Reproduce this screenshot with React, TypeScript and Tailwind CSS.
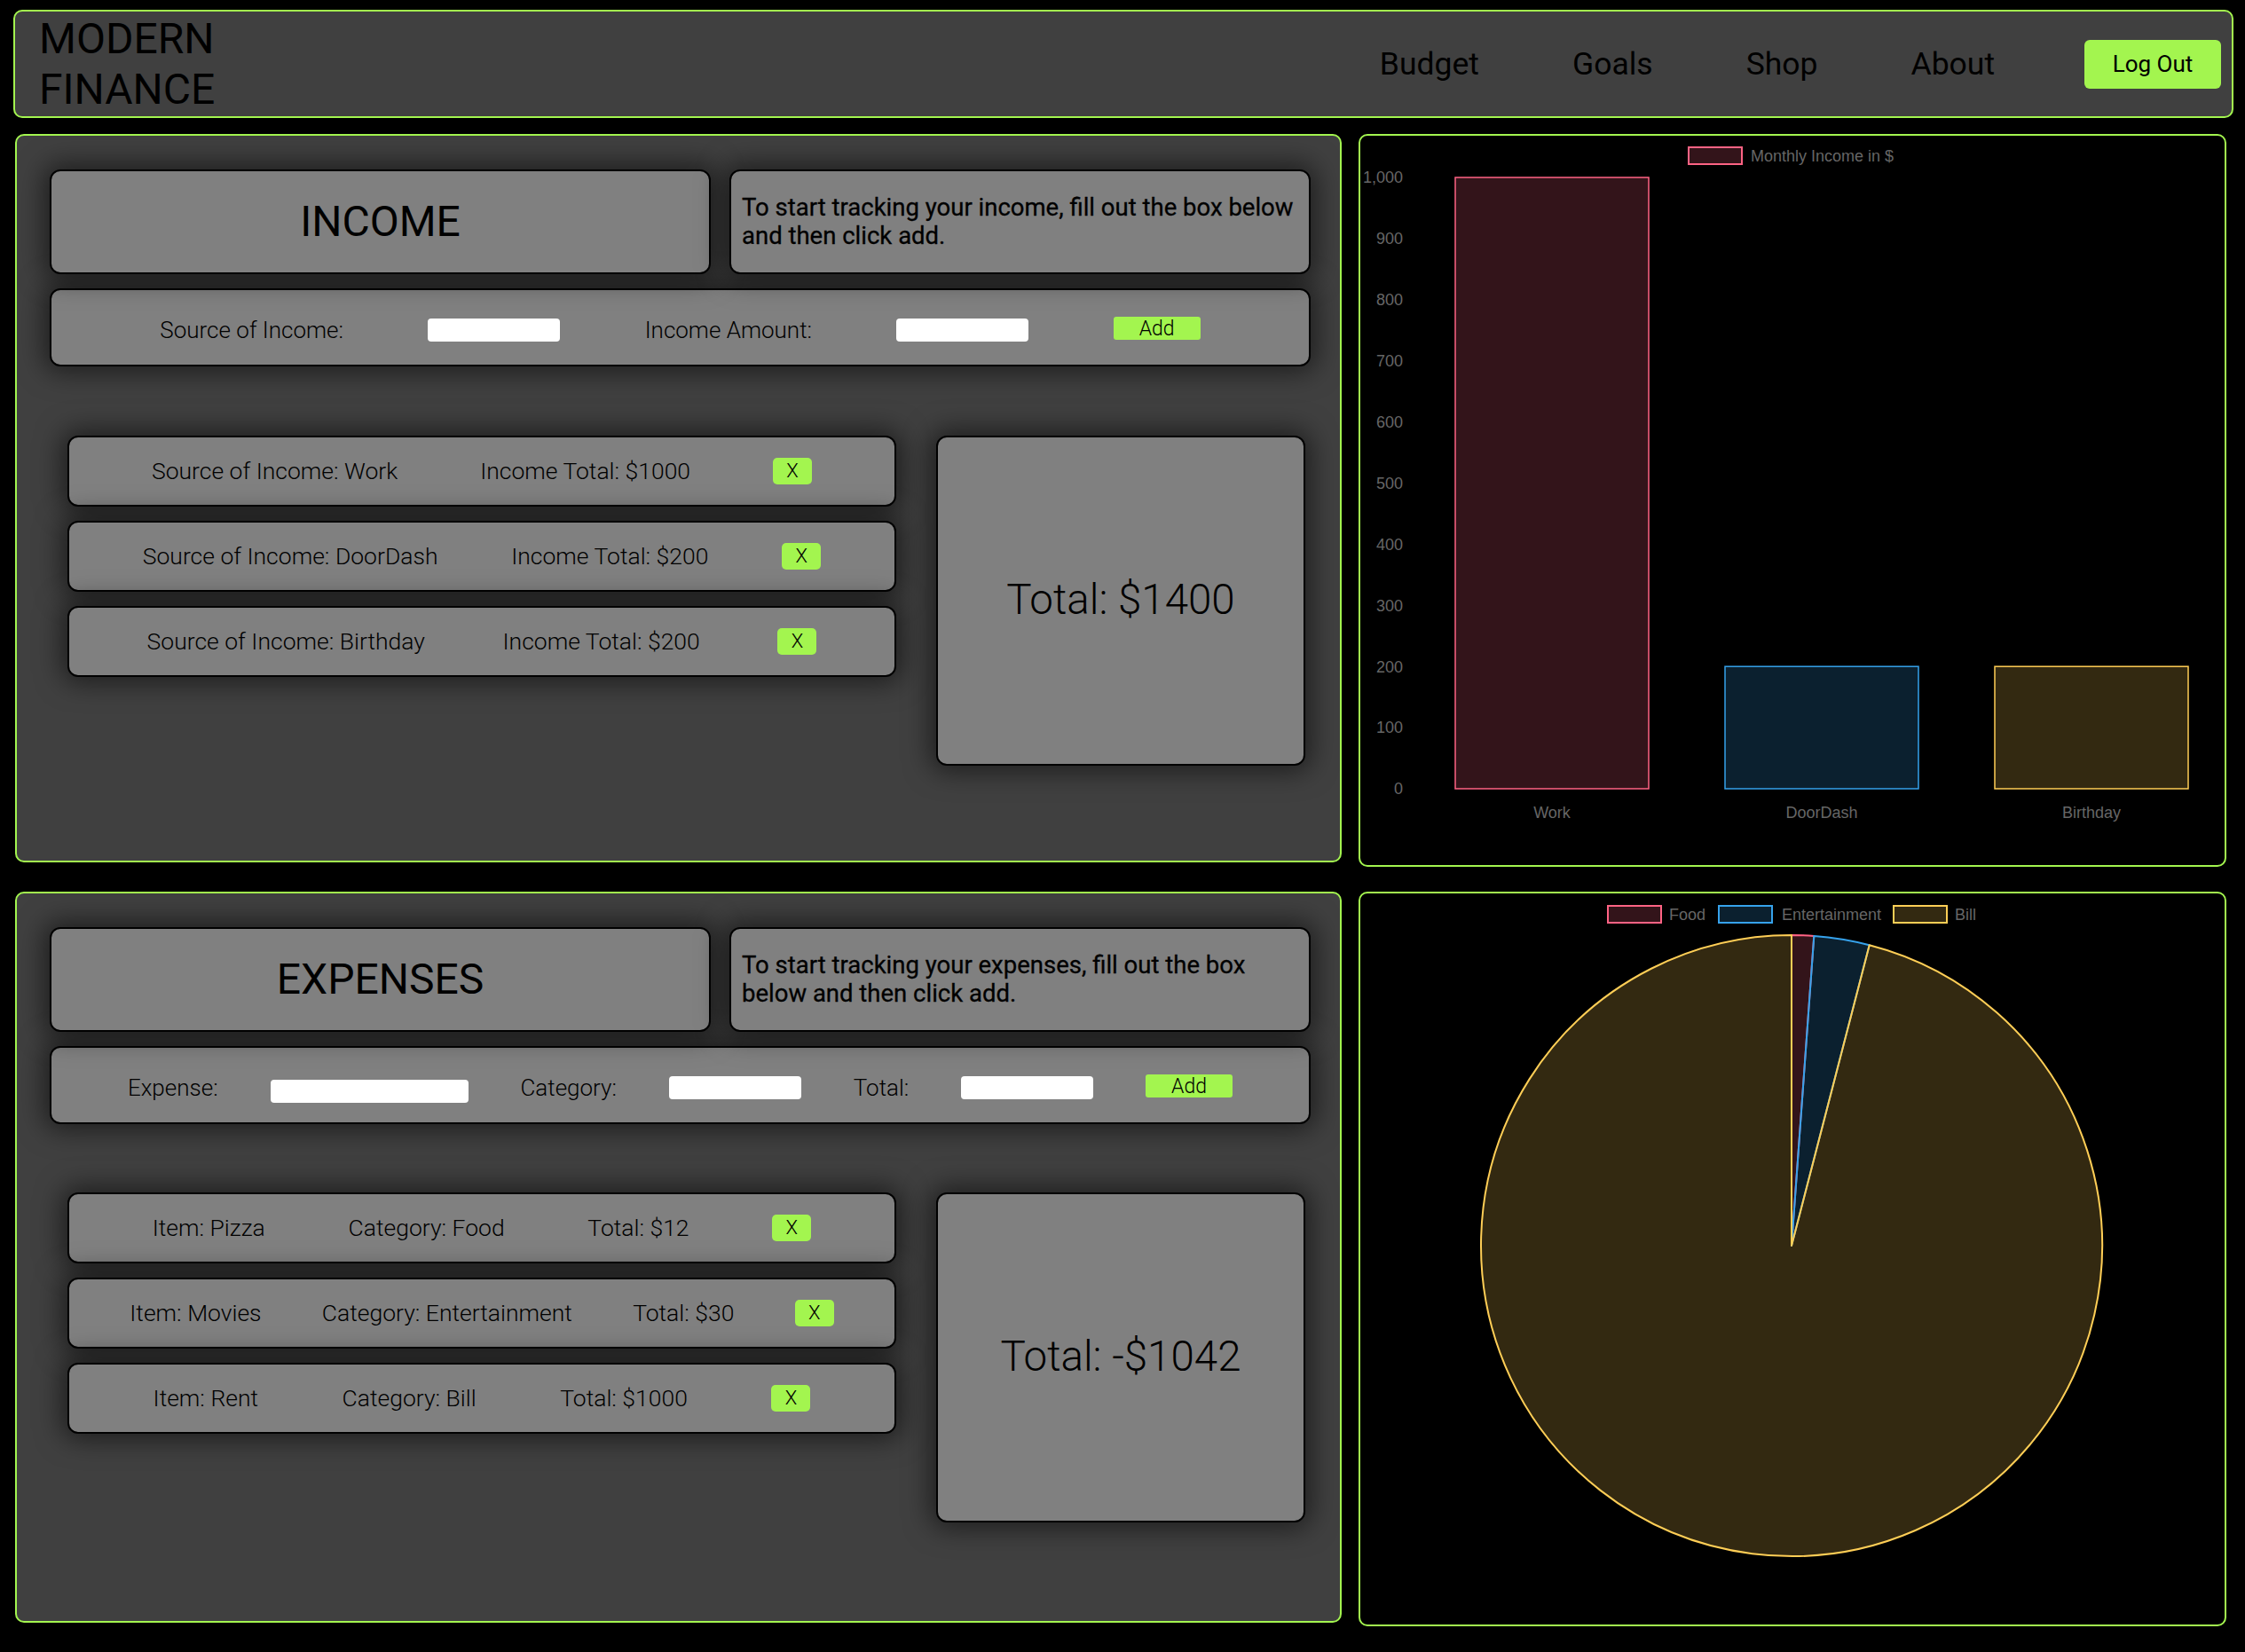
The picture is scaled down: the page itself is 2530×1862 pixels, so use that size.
import React from 'react';

const LIME = 'border-[#a3f54f]';

// shared look of the grey cards inside the panels
const card =
  'bg-[#808080] border-2 border-black rounded-[12px] shadow-[0_0_30px_6px_rgba(0,0,0,0.55)]';

const incomes = [
  { source: 'Work', amount: 1000 },
  { source: 'DoorDash', amount: 200 },
  { source: 'Birthday', amount: 200 },
];

const expenses = [
  { item: 'Pizza', category: 'Food', total: 12 },
  { item: 'Movies', category: 'Entertainment', total: 30 },
  { item: 'Rent', category: 'Bill', total: 1000 },
];

const COLORS = [
  { stroke: 'rgb(255,99,132)', fill: 'rgba(255,99,132,0.2)' },
  { stroke: 'rgb(54,162,235)', fill: 'rgba(54,162,235,0.2)' },
  { stroke: 'rgb(255,206,86)', fill: 'rgba(255,206,86,0.2)' },
];

function Header() {
  return (
    <header
      className={`ml-[15px] mt-[11px] flex h-[122px] w-[2502px] items-center justify-between rounded-[10px] border-2 ${LIME} bg-[#404040] pl-[27px] pr-[12px]`}
    >
      <div className="text-[48px] leading-[57px] text-black">
        MODERN
        <br />
        FINANCE
      </div>
      <nav className="flex items-center">
        <div className="flex items-center gap-[105px] pt-[2px] text-[35.5px] text-black">
          <a>Budget</a>
          <a>Goals</a>
          <a>Shop</a>
          <a>About</a>
        </div>
        <button className="ml-[101px] h-[55px] w-[154px] rounded-[6px] bg-[#a3f54f] text-[26px] text-black">
          Log Out
        </button>
      </nav>
    </header>
  );
}

function XButton() {
  return (
    <button className="h-[30px] w-[44px] rounded-[5px] bg-[#a3f54f] text-[22px] leading-none text-black">
      X
    </button>
  );
}

function AddButton() {
  return (
    <button className="-mt-[4px] h-[26px] w-[98px] rounded-[3px] bg-[#a3f54f] text-[23px] leading-none text-black">
      Add
    </button>
  );
}

function Field({ wide, low }: { wide?: boolean; low?: boolean }) {
  return (
    <input
      className={`${wide ? 'w-[223px]' : 'w-[149px]'} ${low ? 'mt-[8px]' : ''} h-[26px] rounded-[4px] bg-white outline-none`}
    />
  );
}

function PanelTop({ title, text }: { title: string; text: string }) {
  return (
    <div className="grid h-[118px] grid-cols-[745px_1fr] gap-[21px]">
      <div className={`${card} flex items-center justify-center`}>
        <h2 className="text-[48px] text-black">{title}</h2>
      </div>
      <div className={`${card} flex items-center px-[12px]`}>
        <p className="text-[27.5px] leading-[32px] text-black [-webkit-text-stroke:0.3px_black]">
          {text}
        </p>
      </div>
    </div>
  );
}

function IncomePanel() {
  return (
    <section
      className={`h-[821px] rounded-[10px] border-2 ${LIME} bg-[#404040] pl-[37px] pr-[33px] pt-[38px]`}
    >
      <PanelTop
        title="INCOME"
        text="To start tracking your income, fill out the box below and then click add."
      />
      <div
        className={`${card} mt-[16px] flex h-[88px] items-center justify-evenly px-[27px] pt-[6px] text-[26px] font-light text-black`}
      >
        <span>Source of Income:</span>
        <Field />
        <span>Income Amount:</span>
        <Field />
        <AddButton />
      </div>
      <div className="mt-[78px] flex gap-[45px] pl-[20px]">
        <div className="flex w-[934px] flex-col gap-[16px]">
          {incomes.map((inc) => (
            <div
              key={inc.source}
              className={`${card} flex h-[80px] items-center justify-evenly text-[26.5px] font-light text-black`}
            >
              <span>Source of Income: {inc.source}</span>
              <span>Income Total: ${inc.amount}</span>
              <XButton />
            </div>
          ))}
        </div>
        <div className={`${card} flex h-[372px] w-[416px] items-center justify-center`}>
          <span className="text-[47.5px] font-light text-black">Total: $1400</span>
        </div>
      </div>
    </section>
  );
}

function ExpensePanel() {
  return (
    <section
      className={`h-[824px] rounded-[10px] border-2 ${LIME} bg-[#404040] pl-[37px] pr-[33px] pt-[38px]`}
    >
      <PanelTop
        title="EXPENSES"
        text="To start tracking your expenses, fill out the box below and then click add."
      />
      <div
        className={`${card} mt-[16px] flex h-[88px] items-center justify-evenly px-[27px] pt-[6px] text-[26px] font-light text-black`}
      >
        <span>Expense:</span>
        <Field wide low />
        <span>Category:</span>
        <Field />
        <span>Total:</span>
        <Field />
        <AddButton />
      </div>
      <div className="mt-[77px] flex gap-[45px] pl-[20px]">
        <div className="flex w-[934px] flex-col gap-[16px]">
          {expenses.map((e) => (
            <div
              key={e.item}
              className={`${card} flex h-[80px] items-center justify-evenly text-[26.5px] font-light text-black`}
            >
              <span>Item: {e.item}</span>
              <span>Category: {e.category}</span>
              <span>Total: ${e.total}</span>
              <XButton />
            </div>
          ))}
        </div>
        <div className={`${card} flex h-[372px] w-[416px] items-center justify-center`}>
          <span className="text-[47.5px] font-light text-black">Total: -$1042</span>
        </div>
      </div>
    </section>
  );
}

const chartFont = { fontFamily: '"Liberation Sans", Arial, sans-serif' };

function IncomeChart() {
  const y = (v: number) => 736 - v * 0.689;
  const ticks = [0, 100, 200, 300, 400, 500, 600, 700, 800, 900, 1000];
  const bars = incomes.map((inc, i) => ({ ...inc, x: 107 + i * 304 }));
  return (
    <section className={`h-[826px] rounded-[10px] border-2 ${LIME} bg-black`}>
      <svg width="974" height="822" viewBox="0 0 974 822" style={chartFont}>
        <rect x="370" y="13" width="60" height="19" fill={COLORS[0].fill} stroke={COLORS[0].stroke} strokeWidth="2" />
        <text x="440" y="29" fontSize="18" fill="#666">
          Monthly Income in $
        </text>
        {ticks.map((t) => (
          <text key={t} x="48" y={y(t)} dy="0.35em" fontSize="18" fill="#666" textAnchor="end">
            {t.toLocaleString('en-US')}
          </text>
        ))}
        {bars.map((b, i) => (
          <g key={b.source}>
            <rect
              x={b.x}
              y={y(b.amount)}
              width="218"
              height={736 - y(b.amount)}
              fill={COLORS[i].fill}
              stroke={COLORS[i].stroke}
              strokeWidth="1.5"
            />
            <text x={b.x + 109} y="763" dy="0.35em" fontSize="18" fill="#666" textAnchor="middle">
              {b.source}
            </text>
          </g>
        ))}
      </svg>
    </section>
  );
}

function ExpenseChart() {
  const cx = 486;
  const cy = 397;
  const r = 350;
  const sum = expenses.reduce((s, e) => s + e.total, 0);
  const pt = (deg: number) => {
    const a = (deg * Math.PI) / 180;
    return [cx + r * Math.sin(a), cy - r * Math.cos(a)];
  };
  let start = 0;
  const slices = expenses.map((e, i) => {
    const sweep = (e.total / sum) * 360;
    const [x1, y1] = pt(start);
    const [x2, y2] = pt(start + sweep);
    const large = sweep > 180 ? 1 : 0;
    const d = `M ${cx} ${cy} L ${x1} ${y1} A ${r} ${r} 0 ${large} 1 ${x2} ${y2} Z`;
    start += sweep;
    return { d, c: COLORS[i], key: e.category };
  });
  const legend = [
    { label: 'Food', box: 279, text: 348 },
    { label: 'Entertainment', box: 404, text: 475 },
    { label: 'Bill', box: 601, text: 670 },
  ];
  return (
    <section className={`h-[828px] rounded-[10px] border-2 ${LIME} bg-black`}>
      <svg width="974" height="824" viewBox="0 0 974 824" style={chartFont}>
        {legend.map((l, i) => (
          <g key={l.label}>
            <rect x={l.box} y="14" width="60" height="19" fill={COLORS[i].fill} stroke={COLORS[i].stroke} strokeWidth="2" />
            <text x={l.text} y="30" fontSize="18" fill="#666">
              {l.label}
            </text>
          </g>
        ))}
        {slices.map((s) => (
          <path key={s.key} d={s.d} fill={s.c.fill} stroke={s.c.stroke} strokeWidth="2" strokeLinejoin="round" />
        ))}
      </svg>
    </section>
  );
}

export default function App() {
  return (
    <div
      className="h-[1862px] w-[2530px] overflow-hidden bg-black"
      style={{ fontFamily: 'Roboto, "Noto Sans", Arial, sans-serif' }}
    >
      <Header />
      <main className="mt-[18px] grid grid-cols-[1495px_978px] grid-rows-[826px_828px] gap-x-[19px] gap-y-[28px] pl-[17px]">
        <IncomePanel />
        <IncomeChart />
        <ExpensePanel />
        <ExpenseChart />
      </main>
    </div>
  );
}
